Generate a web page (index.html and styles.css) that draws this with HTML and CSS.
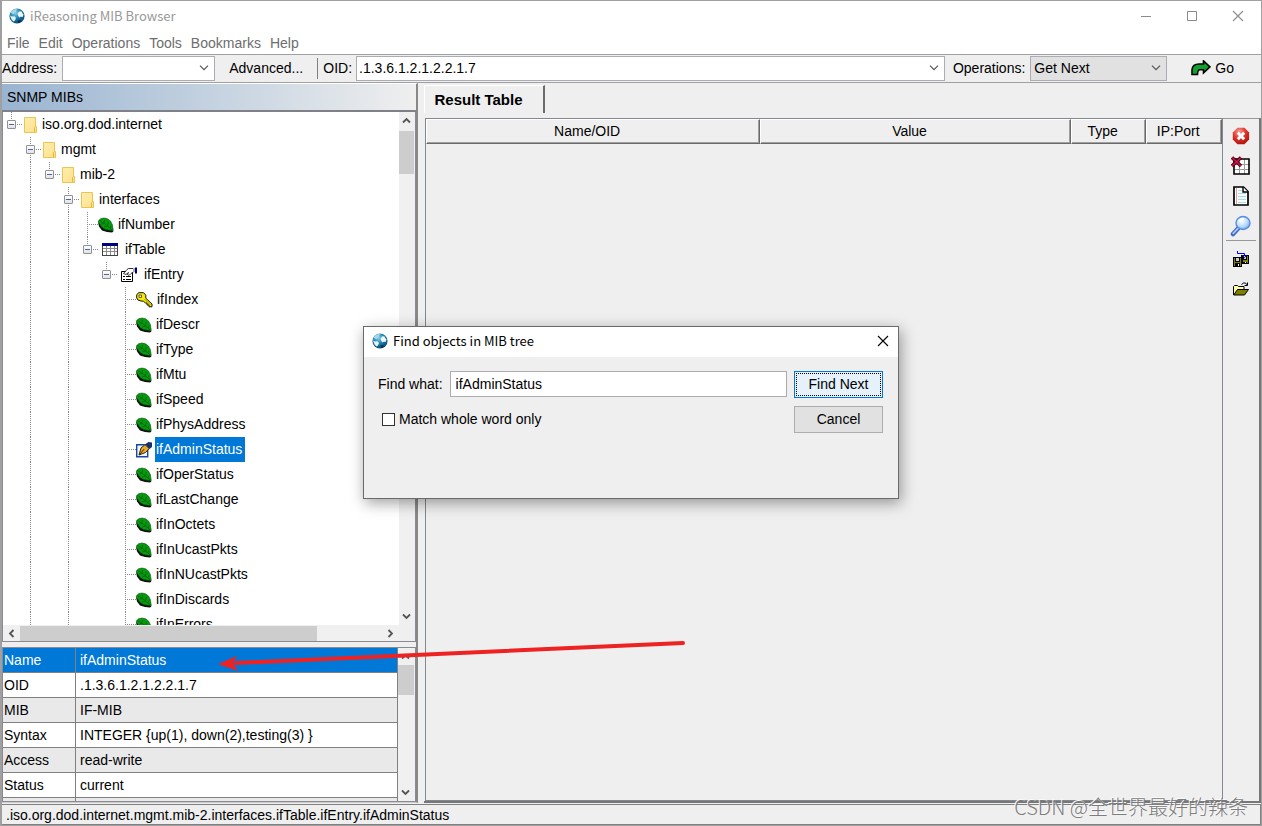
FILE: index.html
```html
<!DOCTYPE html>
<html lang="en">
<head>
<meta charset="utf-8">
<title>iReasoning MIB Browser</title>
<link rel="stylesheet" href="styles.css">
</head>
<body>
<svg class="defs" aria-hidden="true">
  <defs>
    <radialGradient id="sea" cx="0.4" cy="0.3" r="0.8"><stop offset="0" stop-color="#7fd0ea"/><stop offset="0.5" stop-color="#1779a8"/><stop offset="1" stop-color="#063a63"/></radialGradient>
    <radialGradient id="red" cx="0.4" cy="0.25" r="0.85"><stop offset="0" stop-color="#f7a29c"/><stop offset="0.5" stop-color="#dc2f25"/><stop offset="1" stop-color="#a3120c"/></radialGradient>
    <linearGradient id="paper" x1="0" y1="0" x2="1" y2="1"><stop offset="0" stop-color="#ffeeb0"/><stop offset="1" stop-color="#ffe08a"/></linearGradient>
    <radialGradient id="lens" cx="0.4" cy="0.35" r="0.7"><stop offset="0" stop-color="#ffffff"/><stop offset="0.6" stop-color="#b8dcff"/><stop offset="1" stop-color="#6fa6ee"/></radialGradient>
  </defs>
  <symbol id="globe" viewBox="0 0 16 16">
    <circle cx="8" cy="8" r="7.6" fill="url(#sea)"/>
    <path d="M1.500 4.500 3.500 2.200 6.500 1 8.500 1.600 7 2.800 7.400 4 5.400 4.800 4.600 6.200 3.200 5.800z" fill="#a9d6e4"/>
    <path d="M8.500 5.500 10.500 3.200 12.500 3.500 13.500 5.500 14.600 6.400 13.500 9.200 12 8.500 10.500 9.500 9.200 7.800z" fill="#eef8fa"/>
    <path d="M1 7.500 3 8.400 5.600 8.200 7 10 6 12.600 4.600 13.600 2.600 11.500z" fill="#e4f3f7"/>
    <path d="M8.500 12.500 11 12 12 13.400 9.500 15z" fill="#0a2d52"/>
  </symbol>
  <symbol id="folder" viewBox="0 0 14 16">
    <path d="M.5.5h11v9h1v6H.5z" fill="url(#paper)" stroke="#eac54f"/>
    <path d="M10.500 15V10.500l1-1" fill="none" stroke="#e2b93c"/>
  </symbol>
  <symbol id="leaf" viewBox="0 0 16 16">
    <path d="M0 5 1 9.500 4 13.500 9 15 14 15.500 15.500 14.500 12 11 5 9z" fill="#111"/>
    <path d="M1.200 3 2.500 1.800 6 1 9.500 1.800 12.500 4 14.300 7.500 15.300 13.500 12 13.300 7.500 12.600 4 10.500 2 7.500 0 4.500z" fill="#079a10" stroke="#04500a" stroke-width=".6"/>
    <path d="M1.500 3.500 7 7 14.500 13M6 6.200 6.500 3M6 6.500 3.500 7M9.500 8.800 10.300 5M9.500 9 6 10M12 11 13 8.500" fill="none" stroke="#035c09" stroke-width=".7"/>
  </symbol>
  <symbol id="grid" viewBox="0 0 16 15" shape-rendering="crispEdges">
    <path d="M0 1h16v13H0z" fill="#444"/><path d="M0 1h16v3H0z" fill="#000080"/>
    <path d="M1 4h14v9H1z" fill="#fff"/>
    <path d="M1 6h14v1H1zM1 9h14v1H1zM4 4h1v9H4zM8 4h1v9H8zM12 4h1v9h-1z" fill="#8a8a8a"/>
  </symbol>
  <symbol id="props" viewBox="0 0 16 15">
    <path d="M.5 4.500h11v10H.5z" fill="#fff" stroke="#000"/>
    <path d="M2 9.500h2M5 9.500h5M2 12.500h2M5 12.500h5" stroke="#000"/>
    <path d="M2.500 6.500 6 2.500 7.500 1.500h5v3.500L10 6.500 8 8.500 6.500 7.500 7.500 5.500 5 7.500z" fill="#fff" stroke="#000" stroke-width=".8"/>
    <path d="M12 1h2v4h-2z" fill="#aaa"/><path d="M14 .5h2v6h-2z" fill="#000080"/>
  </symbol>
  <symbol id="key" viewBox="0 0 17 16">
    <path d="M2.500.7h5l2.300 2.500v3L16 12v2.800h-3V13h-2v-2H9.500L7.500 9.300 5 9 2 8 .7 6V3z" fill="#f7ea00" stroke="#111"/>
    <path d="M3 3h2.500v2.400H3z" fill="#fff" stroke="#333" stroke-width=".8"/><path d="M8.500 7l6 6" stroke="#8a7d00" stroke-width=".8"/>
  </symbol>
  <symbol id="pen" viewBox="0 0 16 16">
    <path d="M.7 2.700h11v12H.7z" fill="#eef6ff" stroke="#1546a8" stroke-width="1.400"/>
    <path d="M3 13 5 6 9 2.600 13.300 6.500 9.500 10.500z" fill="#e8a92c" stroke="#3a2605"/>
    <path d="M3.400 12.600 8 7.200" stroke="#3a2605"/>
    <path d="M9.500 2 12.500 0 16 .6V5l-2.600 2z" fill="#14306e"/>
  </symbol>
  <symbol id="go" viewBox="0 0 20 16">
    <path d="M1 14.500V9.500C1.500 5.500 4.500 4 8 4h4.500V.9L19 6.900l-6.500 6V9.700H9C7 9.700 6.500 11 6.500 14.500z" fill="#12a02c" stroke="#000" stroke-width="1.600"/>
  </symbol>
  <symbol id="stop" viewBox="0 0 18 18">
    <path d="M5.500.8h7l4.600 4.700v7l-4.600 4.700h-7L.8 12.500v-7z" fill="url(#red)"/>
    <path d="M5.800 5.800 12.200 12.200M12.200 5.800 5.800 12.200" stroke="#fff" stroke-width="3"/>
  </symbol>
  <symbol id="cleartable" viewBox="0 0 20 20">
    <path d="M3 3h15v15H3z" fill="#fff"/>
    <path d="M3 8.500h15M3 13.500h15M8.500 3v15M13.500 3v15" stroke="#999"/>
    <path d="M3 3h15v15H3z" fill="none" stroke="#000" stroke-width="1.600"/>
    <path d="M1 1.500 10 10M10 1.500 1 10" stroke="#400010" stroke-width="3.400"/>
    <path d="M1 1.500 10 10M10 1.500 1 10" stroke="#d4134c" stroke-width="1.600"/>
  </symbol>
  <symbol id="doc" viewBox="0 0 20 20">
    <path d="M3 1h9.500L17 5.500V19H3z" fill="#fff" stroke="#000" stroke-width="1.700"/>
    <path d="M7 4.500h4M7 7.500h8M7 10.500h8M7 13.500h8M7 16.500h8" stroke="#9fe3ea"/>
    <path d="M5.500 2v16" stroke="#f29a9a"/>
    <path d="M12 1v5h5" fill="#fff" stroke="#000" stroke-width="1.400"/>
  </symbol>
  <symbol id="search" viewBox="0 0 22 22">
    <path d="M3 19 8.500 13" stroke="#3d68c4" stroke-width="4.500" stroke-linecap="round"/>
    <path d="M3.200 18.400 8.500 12.800" stroke="#a9cbf7" stroke-width="1.800" stroke-linecap="round"/>
    <ellipse cx="13" cy="8" rx="7" ry="6.500" fill="url(#lens)" stroke="#5b8ae0" stroke-width="1.400"/>
    <path d="M9 6.500c1-2 3-3 5-2.600" fill="none" stroke="#fff" stroke-width="1.600"/>
  </symbol>
  <symbol id="saveall" viewBox="0 0 16 16">
    <path d="M8 4h8v9H8zM0 6h9v10H0z" fill="#000"/>
    <path d="M1 7h1v8H1zM7 7h1v8H7zM2 11h5v1H2zM14 5h1v7h-1zM10 9h4v2h-4z" fill="#808000"/>
    <path d="M3 7h3v3H3zM11 5h2v3h-2z" fill="#ccc"/><path d="M5 13h1v2H5zM12 11h1v1h-1z" fill="#fff"/>
    <path d="M4.500 0v2.500h7V5M9 4l2.500 2.500L14 4" fill="none" stroke="#00f"/>
  </symbol>
  <symbol id="open" viewBox="0 0 16 14">
    <path d="M.5 13V4.500l1-1h3l1 1h5.500V7.500" fill="#ffffa0" stroke="#000"/>
    <path d="M.7 13 4.500 7.500h11L11.500 13z" fill="#808000" stroke="#000"/>
    <path d="M8.500 2.500 10.500 1h2l1.800 2M14.500.5v3h-3" fill="none" stroke="#000"/>
  </symbol>
  <symbol id="up" viewBox="0 0 9 7"><path d="M1 5.500 4.500 2 8 5.500" fill="none" stroke="#555" stroke-width="1.800"/></symbol>
  <symbol id="down" viewBox="0 0 9 7"><path d="M1 1.500 4.500 5 8 1.500" fill="none" stroke="#555" stroke-width="1.800"/></symbol>
  <symbol id="left" viewBox="0 0 7 9"><path d="M5.500 1 2 4.500 5.500 8" fill="none" stroke="#555" stroke-width="1.800"/></symbol>
  <symbol id="right" viewBox="0 0 7 9"><path d="M1.500 1 5 4.500 1.500 8" fill="none" stroke="#555" stroke-width="1.800"/></symbol>
  <symbol id="chev" viewBox="0 0 10 6"><path d="M1 .7 5 4.700 9 .7" fill="none" stroke="#555" stroke-width="1.200"/></symbol>
  <symbol id="close" viewBox="0 0 12 12"><path d="M1 1 11 11M11 1 1 11" stroke="currentColor" stroke-width="1.100"/></symbol>
  <symbol id="min" viewBox="0 0 12 12"><path d="M1 6.500h10" stroke="currentColor"/></symbol>
  <symbol id="max" viewBox="0 0 12 12"><path d="M1.500 1.500h9v9h-9z" fill="none" stroke="currentColor"/></symbol>
</svg>

<div class="window">
  <header class="titlebar">
    <svg class="i16"><use href="#globe"/></svg>
    <h1 class="title">iReasoning MIB Browser</h1>
    <div class="controls">
      <button class="ctl" aria-label="Minimize"><svg class="i12"><use href="#min"/></svg></button>
      <button class="ctl" aria-label="Maximize"><svg class="i12"><use href="#max"/></svg></button>
      <button class="ctl" aria-label="Close"><svg class="i12"><use href="#close"/></svg></button>
    </div>
  </header>
  <nav class="menu">
    <button>File</button><button>Edit</button><button>Operations</button><button>Tools</button><button>Bookmarks</button><button>Help</button>
  </nav>
  <div class="toolbar">
    <label for="address">Address:</label>
    <div class="combo address"><input id="address" type="text"><svg class="chev"><use href="#chev"/></svg></div>
    <button class="flat advanced">Advanced...</button>
    <label class="oid-label" for="oid">OID:</label>
    <div class="combo oid"><input id="oid" type="text" value=".1.3.6.1.2.1.2.2.1.7"><svg class="chev"><use href="#chev"/></svg></div>
    <label class="ops-label" for="ops">Operations:</label>
    <div class="combo ops"><select id="ops"><option>Get Next</option></select><svg class="chev"><use href="#chev"/></svg></div>
    <button class="flat go"><svg class="igo"><use href="#go"/></svg>Go</button>
  </div>

  <main class="main">
    <section class="side">
      <h2 class="side-title">SNMP MIBs</h2>
      <div class="tree-box">
        <div class="tree-view">
          <ul class="tree">
            <li><i class="top"><button class="exp" aria-label="Collapse"></button></i><svg class="ifolder"><use href="#folder"/></svg><span>iso.org.dod.internet</span></li>
            <li><i></i><i class="full node"><button class="exp" aria-label="Collapse"></button></i><svg class="ifolder"><use href="#folder"/></svg><span>mgmt</span></li>
            <li><i></i><i class="full"></i><i class="top"><button class="exp" aria-label="Collapse"></button></i><svg class="ifolder"><use href="#folder"/></svg><span>mib-2</span></li>
            <li><i></i><i class="full"></i><i></i><i class="full node"><button class="exp" aria-label="Collapse"></button></i><svg class="ifolder"><use href="#folder"/></svg><span>interfaces</span></li>
            <li><i></i><i class="full"></i><i></i><i class="full"></i><i class="full tee"></i><svg class="ileaf"><use href="#leaf"/></svg><span>ifNumber</span></li>
            <li><i></i><i class="full"></i><i></i><i class="full"></i><i class="top"><button class="exp" aria-label="Collapse"></button></i><svg class="iwide"><use href="#grid"/></svg><span>ifTable</span></li>
            <li><i></i><i class="full"></i><i></i><i class="full"></i><i></i><i class="top"><button class="exp" aria-label="Collapse"></button></i><svg class="iwide"><use href="#props"/></svg><span>ifEntry</span></li>
            <li><i></i><i class="full"></i><i></i><i class="full"></i><i></i><i></i><i class="full tee"></i><svg class="ikey"><use href="#key"/></svg><span>ifIndex</span></li>
            <li><i></i><i class="full"></i><i></i><i class="full"></i><i></i><i></i><i class="full tee"></i><svg class="ileaf"><use href="#leaf"/></svg><span>ifDescr</span></li>
            <li><i></i><i class="full"></i><i></i><i class="full"></i><i></i><i></i><i class="full tee"></i><svg class="ileaf"><use href="#leaf"/></svg><span>ifType</span></li>
            <li><i></i><i class="full"></i><i></i><i class="full"></i><i></i><i></i><i class="full tee"></i><svg class="ileaf"><use href="#leaf"/></svg><span>ifMtu</span></li>
            <li><i></i><i class="full"></i><i></i><i class="full"></i><i></i><i></i><i class="full tee"></i><svg class="ileaf"><use href="#leaf"/></svg><span>ifSpeed</span></li>
            <li><i></i><i class="full"></i><i></i><i class="full"></i><i></i><i></i><i class="full tee"></i><svg class="ileaf"><use href="#leaf"/></svg><span>ifPhysAddress</span></li>
            <li><i></i><i class="full"></i><i></i><i class="full"></i><i></i><i></i><i class="full tee"></i><svg class="ileaf"><use href="#pen"/></svg><span class="selected">ifAdminStatus</span></li>
            <li><i></i><i class="full"></i><i></i><i class="full"></i><i></i><i></i><i class="full tee"></i><svg class="ileaf"><use href="#leaf"/></svg><span>ifOperStatus</span></li>
            <li><i></i><i class="full"></i><i></i><i class="full"></i><i></i><i></i><i class="full tee"></i><svg class="ileaf"><use href="#leaf"/></svg><span>ifLastChange</span></li>
            <li><i></i><i class="full"></i><i></i><i class="full"></i><i></i><i></i><i class="full tee"></i><svg class="ileaf"><use href="#leaf"/></svg><span>ifInOctets</span></li>
            <li><i></i><i class="full"></i><i></i><i class="full"></i><i></i><i></i><i class="full tee"></i><svg class="ileaf"><use href="#leaf"/></svg><span>ifInUcastPkts</span></li>
            <li><i></i><i class="full"></i><i></i><i class="full"></i><i></i><i></i><i class="full tee"></i><svg class="ileaf"><use href="#leaf"/></svg><span>ifInNUcastPkts</span></li>
            <li><i></i><i class="full"></i><i></i><i class="full"></i><i></i><i></i><i class="full tee"></i><svg class="ileaf"><use href="#leaf"/></svg><span>ifInDiscards</span></li>
            <li><i></i><i class="full"></i><i></i><i class="full"></i><i></i><i></i><i class="full tee"></i><svg class="ileaf"><use href="#leaf"/></svg><span>ifInErrors</span></li>
          </ul>
        </div>
        <div class="vbar"><svg class="arrow-v"><use href="#up"/></svg><div class="thumb tall"></div><svg class="arrow-v"><use href="#down"/></svg></div>
        <div class="hbar"><svg class="arrow-h"><use href="#left"/></svg><div class="track"><div class="thumb wide"></div></div><svg class="arrow-h"><use href="#right"/></svg></div>
      </div>
      <div class="details-box">
        <div class="details-view">
          <table class="details">
            <tr class="on"><th scope="row">Name</th><td>ifAdminStatus</td></tr>
            <tr><th scope="row">OID</th><td>.1.3.6.1.2.1.2.2.1.7</td></tr>
            <tr><th scope="row">MIB</th><td>IF-MIB</td></tr>
            <tr><th scope="row">Syntax</th><td>INTEGER {up(1), down(2),testing(3) }</td></tr>
            <tr><th scope="row">Access</th><td>read-write</td></tr>
            <tr><th scope="row">Status</th><td>current</td></tr>
            <tr><th scope="row"></th><td></td></tr>
          </table>
        </div>
        <div class="vbar"><svg class="arrow-v"><use href="#up"/></svg><div class="thumb short"></div><svg class="arrow-v"><use href="#down"/></svg></div>
      </div>
    </section>

    <section class="work">
      <div class="tabs"><button class="tab">Result Table</button></div>
      <div class="work-body">
        <div class="results-box">
          <table class="results">
            <thead><tr><th class="c-name">Name/OID</th><th class="c-value">Value</th><th class="c-small">Type</th><th class="c-small">IP:Port</th></tr></thead>
          </table>
        </div>
        <div class="tools">
          <button aria-label="Stop"><svg class="t18"><use href="#stop"/></svg></button>
          <button aria-label="Clear table"><svg class="t20"><use href="#cleartable"/></svg></button>
          <button aria-label="New document"><svg class="t20"><use href="#doc"/></svg></button>
          <button class="last" aria-label="Find"><svg class="t22"><use href="#search"/></svg></button>
          <button class="first" aria-label="Save"><svg class="t16"><use href="#saveall"/></svg></button>
          <button aria-label="Open"><svg class="t16"><use href="#open"/></svg></button>
        </div>
      </div>
    </section>
  </main>
  <footer class="status">.iso.org.dod.internet.mgmt.mib-2.interfaces.ifTable.ifEntry.ifAdminStatus</footer>
</div>

<svg class="pointer" viewBox="0 0 468 30" aria-hidden="true">
  <path d="M18 22 465 2" stroke="#ee2222" stroke-width="4" stroke-linecap="round"/>
  <path d="M0 23 19 15 15 22 20 30z" fill="#ee2222"/>
</svg>

<form class="dialog" role="dialog" aria-labelledby="find-title">
  <div class="dialog-title">
    <svg class="i16"><use href="#globe"/></svg>
    <h2 class="title" id="find-title">Find objects in MIB tree</h2>
    <button type="button" class="dclose" aria-label="Close"><svg class="i12"><use href="#close"/></svg></button>
  </div>
  <div class="dialog-body">
    <label for="what">Find what:</label>
    <input class="what" id="what" type="text" value="ifAdminStatus">
    <button type="button" class="btn primary">Find Next</button>
    <label class="check"><input type="checkbox">Match whole word only</label>
    <button type="button" class="btn">Cancel</button>
  </div>
</form>
<div class="watermark">CSDN @全世界最好的辣条</div>
</body>
</html>
```
FILE: styles.css
```css
* { box-sizing: border-box; }
body, button, input, select { font: 14px/16px "Liberation Sans", Arial, sans-serif; color: #000; }
body { margin: 0; height: 100vh; overflow: hidden; background: #efefef; position: relative; }
button { padding: 0; border: 0; background: none; }
input, select { margin: 0; }
svg { display: block; flex: none; }
.defs { position: absolute; width: 0; height: 0; }
.i16 { width: 16px; height: 16px; }
.i12 { width: 12px; height: 12px; }

.window { height: 100%; display: flex; flex-direction: column; border: 1px solid #a0a0a0; border-left: 2px solid #a0a0a0; }

.titlebar { display: flex; align-items: center; height: 29px; padding-left: 7px; gap: 5px; background: #fff; color: #999; }
.title { margin: 0; font: 13px/18px "Noto Sans CJK SC", "Noto Sans", sans-serif; color: inherit; }
.titlebar .title { flex: 1; }
.controls { display: flex; }
.ctl { width: 46px; display: flex; justify-content: center; color: #8c8c8c; }

.menu { display: flex; height: 25px; padding: 5px 5px 0; gap: 9px; background: #fff; border-bottom: 1px solid #a0a0a0; }
.menu button { color: #6d6d6d; height: 16px; }

.toolbar { display: flex; align-items: center; height: 28px; flex: none; padding-bottom: 1px; border-bottom: 1px solid #a0a0a0; }
.combo { display: flex; align-items: center; height: 25px; border: 1px solid #acacb4; background: #fff; padding-right: 5px; }
.combo input { flex: 1; min-width: 0; width: 0; height: 20px; border: 0; padding: 0 2px; outline: 0; }
.combo select { flex: 1; border: 0; padding: 0 3px; background: none; appearance: none; }
.chev { width: 10px; height: 6px; }
.address { width: 153px; margin-left: 5px; }
.advanced { width: 103px; height: 21px; border-right: 1px solid #808080; text-align: left; padding-left: 14px; }
.oid-label { margin-left: 5px; }
.oid { flex: 1; margin-left: 4px; }
.ops-label { margin-left: 8px; }
.ops { width: 137px; margin-left: 5px; background: #e1e1e1; }
.go { display: flex; align-items: center; gap: 4px; margin: 0 27px 0 24px; }
.igo { width: 20px; height: 16px; }

.main { flex: 1; min-height: 0; display: flex; gap: 6px; }
.side { width: 416px; flex: none; display: flex; flex-direction: column; border: 1px solid #fff; border-left: 0; border-right: 2px solid #888; border-bottom: 1px solid #ccc; }
.side-title { margin: 0; height: 28px; flex: none; padding: 5px; font: inherit; background: linear-gradient(90deg, #99b4d1, #efefef); border-bottom: 2px solid #808088; }

.tree-box { flex: 1; min-height: 0; display: grid; grid-template: minmax(0, 1fr) 16px / minmax(0, 1fr) 16px; border: 1px solid #8a8a90; border-top: 0; background: #efefef; }
.tree-view { overflow: hidden; background: #fff; }
.tree { margin: 0; padding: 0; list-style: none; }
.tree li { display: flex; align-items: center; height: 25px; }
.tree i { width: 19px; height: 25px; flex: none; padding: 8px 0 0 4px; background-repeat: no-repeat; }
.tree i.full, .tree i.top { background-image: repeating-linear-gradient(#888 0 1px, transparent 1px 2px), repeating-linear-gradient(90deg, #888 0 1px, transparent 1px 2px); background-size: 1px 100%, 0 0; background-position: 8px 0, 14px 12px; }
.tree i.top { background-size: 1px 8px, 5px 1px; }
.tree i.node { background-size: 1px 100%, 5px 1px; }
.tree i.tee { background-size: 1px 100%, 11px 1px; background-position: 8px 0, 8px 12px; }
.exp { display: block; width: 9px; height: 9px; border: 1px solid #919191; border-radius: 1px; background: linear-gradient(#4b63a7, #4b63a7) center / 5px 1px no-repeat, linear-gradient(#fff, #e2e2e2); }
.tree span { line-height: 25px; height: 25px; padding: 0 3px 0 1px; }
.ifolder { width: 14px; height: 16px; margin: 0 3px 0 2px; }
.iwide { width: 16px; height: 15px; margin: 0 6px 0 4px; }
.ileaf { width: 16px; height: 16px; margin-right: 3px; }
.ikey { width: 17px; height: 16px; margin-right: 3px; }
.tree .selected { background: #0078d7; color: #fff; }

.vbar { display: flex; flex-direction: column; align-items: stretch; background: #f0f0f0; padding: 5px 1px 5px 0; }
.arrow-v { width: 9px; height: 7px; margin: 0 3px; }
.thumb { background: #cdcdcd; }
.vbar .thumb { margin: 7px 0 auto; }
.tall { height: 43px; }
.vbar .short { height: 30px; margin-top: 5px; }
.hbar { display: flex; align-items: center; background: #f0f0f0; padding: 0 5px; gap: 5px; }
.arrow-h { width: 7px; height: 9px; }
.track { flex: 1; height: 15px; }
.wide { width: 82%; height: 15px; }

.details-box { height: 155px; flex: none; margin-top: 5px; display: grid; grid-template-columns: minmax(0, 1fr) 17px; border: 1px solid #8a8a90; background: #f0f0f0; }
.details-view { overflow: hidden; border-right: 1px solid #808080; }
.details { width: 100%; border-collapse: separate; border-spacing: 0; table-layout: fixed; background: #fff; }
.details th, .details td { height: 25px; padding: 0 0 0 4px; font-weight: 400; text-align: left; border-bottom: 1px solid #808080; }
.details th { width: 73px; padding-left: 1px; border-right: 1px solid #808080; }
.details tr:nth-child(odd) { background: #e9e9e9; }
.details tr.on { background: #0078d7; color: #fff; }

.work { flex: 1; min-width: 0; display: flex; flex-direction: column; padding-top: 2px; }
.tabs { height: 33px; flex: none; }
.tab { height: 28px; width: 121px; padding-right: 11px; font-size: 15px; font-weight: 700; border: 1px solid #fff; border-bottom: 0; border-right: 2px solid #6b6b6b; }
.work-body { flex: 1; display: flex; border-right: 2px solid #777; border-bottom: 2px solid #777; }
.results-box { flex: 1; border: 1px solid #828790; margin-left: 1px; }
.results { width: 100%; border-collapse: separate; border-spacing: 0; table-layout: fixed; }
.results th { height: 25px; padding: 0 12px 1px 0; font-weight: 400; border: 1px solid #fff; border-right: 1px solid #696969; border-bottom: 1px solid #696969; box-shadow: inset -1px -1px #a0a0a0; }
.c-name { width: 42%; }
.c-value { width: 39%; }
.c-small { width: 75px; }
.tools { width: 36px; display: flex; flex-direction: column; align-items: center; padding-top: 2px; border-top: 1px solid #999; }
.tools button { width: 30px; height: 30px; display: flex; align-items: center; justify-content: center; }
.tools .last { border-bottom: 1px solid #999; }
.tools .first { margin-top: 3px; }
.t16 { width: 16px; height: 16px; }
.t18 { width: 18px; height: 18px; }
.t20 { width: 20px; height: 20px; }
.t22 { width: 22px; height: 22px; }

.status { height: 21px; flex: none; border: 1px solid #808080; border-left: 0; padding: 2px 4px; margin-top: 1px; }

.pointer { position: absolute; left: 218px; top: 641px; width: 468px; height: 30px; }

.dialog { position: absolute; inset: 0 0 2px; margin: auto; width: 536px; height: 173px; border: 1px solid #6a6a6a; background: #efefef; box-shadow: 2px 4px 14px rgba(0, 0, 0, .38); }
.dialog-title { display: flex; align-items: center; gap: 5px; height: 30px; padding: 0 9px 1px 8px; background: #fff; }
.dialog-title .title { flex: 1; }
.dclose { color: #000; }
.dialog-body { display: grid; grid-template-columns: auto 1fr 89px; gap: 8px 7px; padding: 14px 15px 0 14px; align-items: center; }
.what { width: 100%; height: 26px; border: 1px solid #acacac; background: #fff; padding: 0 5px; outline: 0; }
.btn { height: 27px; background: #e1e1e1; border: 1px solid #adadad; }
.primary { background: #e5f1fb; border-color: #0078d7; outline: 1px dotted #000; outline-offset: -3px; }
.check { grid-column: 1 / 3; display: flex; align-items: center; gap: 4px; padding-left: 4px; }
.check input { appearance: none; width: 13px; height: 13px; border: 1px solid #333; background: #fff; }

.watermark { position: absolute; right: 14px; bottom: 5px; font: 300 20px/28px "Noto Sans CJK SC", sans-serif; color: #7c7c7c; text-shadow: -1px -1px #fafafa; }
```
